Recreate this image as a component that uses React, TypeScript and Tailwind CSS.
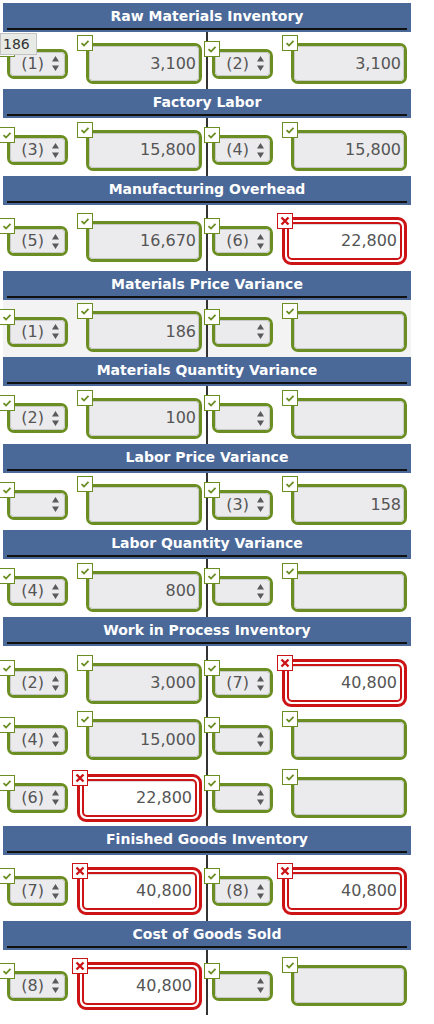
import React from 'react';

type Field = { sel?: string; val?: string; bad?: boolean };
type Row = { left: Field; right: Field; h: string; pt: string; tint?: boolean };
type Section = { title: string; rows: Row[] };

const sections: Section[] = [
  {
    title: 'Raw Materials Inventory',
    rows: [{ left: { sel: '(1)', val: '3,100' }, right: { sel: '(2)', val: '3,100' }, h: 'h-[57px]', pt: 'pt-[6px]' }],
  },
  {
    title: 'Factory Labor',
    rows: [{ left: { sel: '(3)', val: '15,800' }, right: { sel: '(4)', val: '15,800' }, h: 'h-[58px]', pt: 'pt-[6px]' }],
  },
  {
    title: 'Manufacturing Overhead',
    rows: [
      { left: { sel: '(5)', val: '16,670' }, right: { sel: '(6)', val: '22,800', bad: true }, h: 'h-[66px]', pt: 'pt-[6px]' },
    ],
  },
  {
    title: 'Materials Price Variance',
    rows: [{ left: { sel: '(1)', val: '186' }, right: {}, h: 'h-[57px]', pt: 'pt-[6px]', tint: true }],
  },
  {
    title: 'Materials Quantity Variance',
    rows: [{ left: { sel: '(2)', val: '100' }, right: {}, h: 'h-[58px]', pt: 'pt-[6px]' }],
  },
  {
    title: 'Labor Price Variance',
    rows: [{ left: {}, right: { sel: '(3)', val: '158' }, h: 'h-[57px]', pt: 'pt-[6px]' }],
  },
  {
    title: 'Labor Quantity Variance',
    rows: [{ left: { sel: '(4)', val: '800' }, right: {}, h: 'h-[58px]', pt: 'pt-[6px]' }],
  },
  {
    title: 'Work in Process Inventory',
    rows: [
      { left: { sel: '(2)', val: '3,000' }, right: { sel: '(7)', val: '40,800', bad: true }, h: 'h-[62px]', pt: 'pt-[12px]' },
      { left: { sel: '(4)', val: '15,000' }, right: {}, h: 'h-[57px]', pt: 'pt-[6px]' },
      { left: { sel: '(6)', val: '22,800', bad: true }, right: {}, h: 'h-[61px]', pt: 'pt-[4px]' },
    ],
  },
  {
    title: 'Finished Goods Inventory',
    rows: [
      {
        left: { sel: '(7)', val: '40,800', bad: true },
        right: { sel: '(8)', val: '40,800', bad: true },
        h: 'h-[66px]',
        pt: 'pt-[6px]',
      },
    ],
  },
  {
    title: 'Cost of Goods Sold',
    rows: [{ left: { sel: '(8)', val: '40,800', bad: true }, right: {}, h: 'h-[65px]', pt: 'pt-[6px]' }],
  },
];

const CheckMark = ({ className }: { className: string }) => (
  <svg width="16" height="16" viewBox="0 0 16 16" className={className}>
    <rect x="0.5" y="0.5" width="15" height="15" fill="#fff" stroke="#6b8e23" />
    <path d="M4.5 8.2 L7 10.5 L11.5 5.8" fill="none" stroke="#6b8e23" strokeWidth="1.8" />
  </svg>
);

const CrossMark = ({ className }: { className: string }) => (
  <svg width="16" height="16" viewBox="0 0 16 16" className={className}>
    <rect x="0.5" y="0.5" width="15" height="15" fill="#fff" stroke="#cc1417" />
    <path d="M4.5 4.5 L11.5 11.5 M11.5 4.5 L4.5 11.5" fill="none" stroke="#cc1417" strokeWidth="2.4" />
  </svg>
);

const Arrows = () => (
  <svg width="7" height="15" viewBox="0 0 7 15" className="shrink-0">
    <path d="M3.5 0 L7 5.5 L0 5.5 Z M0 9.5 L7 9.5 L3.5 15 Z" fill="#5a5a5a" />
  </svg>
);

// dropdown showing the entry number
const Picker = ({ label }: { label?: string }) => (
  <div className="relative ml-[4px] h-[30px] w-[61px] shrink-0">
    <div className="h-full rounded-[7px] border-[3px] border-[#6b8e23]">
      <div className="flex h-full items-center justify-end gap-[8px] rounded-[4px] border border-[#c9c9c9] bg-[#ebebed] pr-[5px] text-[16px] text-[#555]">
        {label && <span className="leading-none">{label}</span>}
        <Arrows />
      </div>
    </div>
    <CheckMark className="absolute -left-[8px] -top-[8px]" />
  </div>
);

const Amount = ({ val, bad }: Field) => {
  if (bad) {
    return (
      <div className="relative ml-[9px] shrink-0">
        <div className="h-[48px] w-[125px] rounded-[9px] border-[3px] border-[#cc1417] bg-white p-[2px]">
          <div className="flex h-full items-center justify-end rounded-[5px] border-2 border-[#cc1417] pr-[3px] text-[16px] text-[#555] shadow-[inset_0_1px_1px_rgba(0,0,0,0.15)]">
            {val}
          </div>
        </div>
        <CrossMark className="absolute -left-[5px] -top-[4px]" />
      </div>
    );
  }
  return (
    <div className="relative ml-[18px] shrink-0">
      <div className="h-[41px] w-[116px] rounded-[7px] border-[3px] border-[#6b8e23]">
        <div className="flex h-full items-center justify-end rounded-[4px] border border-[#c9c9c9] bg-[#ebebed] pr-[2px] text-[16px] text-[#555]">
          {val}
        </div>
      </div>
      <CheckMark className="absolute -left-[9px] -top-[8px]" />
    </div>
  );
};

const Half = ({ f, pt }: { f: Field; pt: string }) => (
  <div className={`flex w-[203px] items-center ${pt}`}>
    <Picker label={f.sel} />
    <Amount val={f.val} bad={f.bad} />
  </div>
);

export default function App() {
  return (
    <div className="min-h-screen bg-white font-['DejaVu_Sans',Verdana,sans-serif]">
      <div className="relative ml-[3px] w-[408px] pt-[3px]">
        {sections.map((s) => (
          <div key={s.title}>
            <div className="h-[29px] bg-[#4a6898] px-[4px] pt-[1px]">
              <div className="h-[26px] border-b-2 border-[#111] text-center text-[14px] font-bold leading-[24px] text-white">
                {s.title}
              </div>
            </div>
            {s.rows.map((r, i) => (
              <div key={i} className={`flex ${r.h} ${r.tint ? 'bg-[#f3f3f3]' : ''}`}>
                <Half f={r.left} pt={r.pt} />
                <div className="w-[2px] self-stretch bg-[#333]" />
                <Half f={r.right} pt={r.pt} />
              </div>
            ))}
          </div>
        ))}

        {/* hover tip for the first entry */}
        <div className="absolute left-[-3px] top-[33px] z-10 flex h-[22px] w-[37px] items-center border border-[#c4c4c4] bg-[#e8ebe5] pl-[2px] text-[14px] text-[#333]">
          186
        </div>
      </div>
    </div>
  );
}
